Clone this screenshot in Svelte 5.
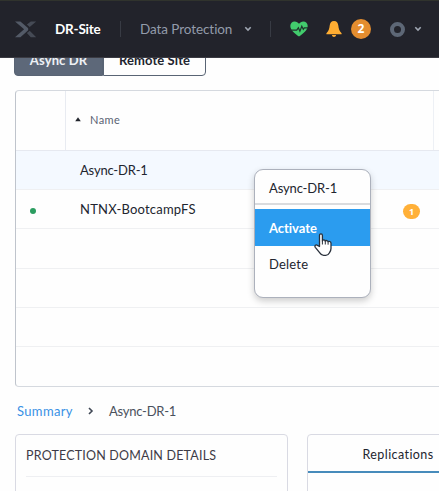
<script>
  const rows = [
    { name: 'Async-DR-1', selected: true },
    { name: 'NTNX-BootcampFS', active: true, alerts: 1 },
    {}, {}, {}, {}
  ];
</script>

<div class="app">
  <header>
    <svg class="logo" width="22" height="17" viewBox="0 0 22 17">
      <path fill="#454a55" d="M15.800.500h5.400l-6.500 5.400-2.800-2.300z M11.900 11.900 14.700 9.800 21.200 16.200h-5.400z" />
      <path fill="#535a67" d="M0 .5h5.400l7 6.100c1.200 1 1.200 2.500 0 3.500l-7 6.100H0l9.100-7.900z" />
    </svg>
    <span class="site">DR-Site</span>
    <i class="sep first"></i>
    <span class="section">Data Protection</span>
    <svg class="chev" width="8" height="6" viewBox="0 0 8 6"><path d="M1.300 1.300 4 4l2.700-2.700" /></svg>
    <i class="sep second"></i>
    <svg class="heart" width="18" height="16" viewBox="0 0 18 16">
      <path fill="#42cc6d" d="M9 15.600C5 12.500.3 9.200.3 4.900.3 2.300 2.200.4 4.700.4 6.500.4 8.100 1.300 9 2.800 9.900 1.300 11.500.4 13.300.4c2.500 0 4.400 1.900 4.400 4.500 0 4.300-4.700 7.600-8.700 10.700z" />
      <path fill="none" stroke="#20352e" stroke-width="1.200" d="M0 9.200h6.700l1.700-2.400 1.500 3.400 1.900-5 1.500 3.100 1-1.500H18" />
    </svg>
    <svg class="bell" width="16" height="16" viewBox="0 0 16 16">
      <path fill="#ffad32" d="M8 0C5.300 0 4 1.800 3.700 4.500 3.300 8 2.800 9.800.4 12.200v1h15.200v-1c-2.400-2.400-2.900-4.200-3.300-7.700C12 1.800 10.700 0 8 0zM5.900 14h4.200c-.2 1.200-1 1.900-2.100 1.900S6.100 15.200 5.900 14z" />
    </svg>
    <span class="count">2</span>
    <i class="ring"></i>
    <svg class="chev last" width="8" height="6" viewBox="0 0 8 6"><path d="M1.300 1.300 4 4l2.700-2.700" /></svg>
  </header>

  <div class="tabs">
    <div class="tab on"><span>Async DR</span></div>
    <div class="tab"><span>Remote Site</span></div>
  </div>

  <section class="table">
    <div class="thead">
      <div class="c0"></div>
      <div class="c1"><svg width="6" height="5" viewBox="0 0 6 5"><path fill="#22252c" d="M3 .3 5.800 4.300H.2z" /></svg><span>Name</span></div>
      <div class="c2"></div>
    </div>
    {#each rows as row}
      <div class="row" class:selected={row.selected}>
        <div class="status">{#if row.active}<i></i>{/if}</div>
        <span class="name" class:long={row.active}>{row.name ?? ''}</span>
        {#if row.alerts}<b>{row.alerts}</b>{/if}
      </div>
    {/each}
  </section>

  <nav>
    <a href="#summary">Summary</a>
    <svg width="6" height="8" viewBox="0 0 6 8"><path fill="none" stroke="#404855" stroke-width="1.600" d="m1 1 3 3-3 3" /></svg>
    <span>Async-DR-1</span>
  </nav>

  <div class="panels">
    <section class="details"><h2>PROTECTION DOMAIN DETAILS</h2></section>
    <section class="reps"><div class="reptab"><span>Replications</span></div></section>
  </div>

  <div class="menu">
    <div class="title">Async-DR-1</div>
    <div class="item hot">Activate</div>
    <div class="item">Delete</div>
  </div>
  <svg class="cursor" width="19" height="24" viewBox="0 0 19 24">
    <path fill="#fff" stroke="#29303b" stroke-width="1.300" stroke-linejoin="round" d="M5.500 13.500V2.400C5.500.4 8.400.4 8.400 2.400V8c.2-1.500 2.700-1.400 2.900.3.400-1.200 2.600-1 2.800.6.700-.9 2.900-.6 2.900 1.300v5.300c0 1.900-.7 3-1.500 4.200-.9 1.700-1.900 2.600-3.700 2.600H9.600c-1.900 0-2.900-.9-3.800-2.400L1.300 14.300c-1.100-1.700.6-3.200 2.200-1.900z" />
    <path fill="none" stroke="#29303b" stroke-width="1" d="M8.400 8v3.500M11.300 8.500v3M14.100 9.200v2.500" />
  </svg>
</div>

<style>
  .app {
    position: relative;
    width: 439px;
    height: 491px;
    overflow: hidden;
    background: #fefefe;
    color: #22252f;
    font: 13px/18px Lato, sans-serif;
    white-space: nowrap;
  }
  header {
    box-sizing: border-box;
    height: 58px;
    display: flex;
    align-items: center;
    background: #22232b;
    border-top: 1px solid #30332d;
    border-bottom: 1px solid #3b3b43;
    padding-left: 15px;
  }
  header > * { flex: none; }
  .site { width: 65px; margin-left: 18px; color: #fff; font-weight: 700; font-size: 13.500px; letter-spacing: -.2px; }
  .sep { width: 1px; height: 16px; background: #383b44; }
  .section { width: 99px; margin-left: 19px; color: #939baa; font-size: 13.500px; letter-spacing: -.08px; }
  .chev { margin-left: 5px; }
  .chev path { fill: none; stroke: #a0a7b3; stroke-width: 1.600; }
  .sep.second { margin-left: 18px; }
  .heart { margin-left: 18.500px; }
  .bell { margin-left: 18.500px; }
  .count {
    width: 20px; height: 20px; margin-left: 9px; border-radius: 50%;
    background: #e48d2f; color: #fff; text-align: center;
    font: 700 12px/20px "Open Sans", sans-serif;
  }
  .ring { box-sizing: border-box; width: 15px; height: 15px; margin-left: 19px; border: 4px solid #5d6776; border-radius: 50%; }
  .last { margin-left: 9px; }

  .tabs { height: 18px; width: 192px; margin-left: 14px; display: flex; align-items: flex-end; overflow: hidden; }
  .tab {
    box-sizing: border-box; flex: none; width: 103px; height: 30px; padding-top: 2px;
    border: 1px solid #596474; border-radius: 0 4px 4px 0; text-align: center;
    font-weight: 700; font-size: 13px; line-height: 22px; letter-spacing: .1px;
  }
  .tab.on { width: 89px; background: #5d6879; color: #eef1f5; border-radius: 4px 0 0 4px; }

  .table {
    box-sizing: border-box; height: 297px; margin: 14px 0 0 15px;
    border: 1px solid #d5d9df; border-left-color: #bfc4cc; border-right: 0; border-radius: 4px 0 0 4px; overflow: hidden;
  }
  .thead { display: flex; height: 59px; border-bottom: 1px solid #e6e9f0; }
  .c0 { width: 49px; border-right: 1px solid #e8ebf1; }
  .c1 { width: 367px; display: flex; align-items: center; border-right: 1px solid #edf0f5; font-size: 11px; color: #596273; }
  .c1 svg { margin: -3px 0 0 9px; }
  .c1 span { margin: -1px 0 0 9px; letter-spacing: .4px; }
  .row { box-sizing: border-box; height: 39.200px; display: flex; align-items: center; border-bottom: 1px solid #eff0f2; }
  .row:last-child { border: 0; }
  .selected { background: #f4f9ff; }
  .status { width: 64px; }
  .status i { display: block; width: 6px; height: 6px; margin: 4px 0 0 14px; border-radius: 50%; background: #2b9d60; }
  .name { width: 323px; font-size: 13px; letter-spacing: -.2px; }
  .name.long { letter-spacing: .2px; }
  .row b { width: 17px; height: 15px; margin-top: 4px; border-radius: 8px; background: #ffb038; color: #fff; text-align: center; font: 700 9px/15px "Open Sans", sans-serif; }

  nav { display: flex; align-items: center; height: 18px; margin: 15px 0 0 17px; }
  nav a { width: 71px; color: #3991e5; text-decoration: none; letter-spacing: .35px; }
  nav span { margin-left: 15px; color: #4a515d; letter-spacing: -.25px; }

  .panels { display: flex; margin: 14px 0 0 15px; }
  .details, .reps { box-sizing: border-box; flex: none; height: 80px; border: 1px solid #d9dae3; border-radius: 4px; }
  .details { width: 273px; padding: 0 10px; }
  h2 { height: 41px; margin: 0; border-bottom: 1px solid #eeeff2; font: 400 12.500px/42px Lato, sans-serif; letter-spacing: .19px; color: #3d3b47; }
  .reps { width: 180px; margin-left: 19px; }
  .reptab { height: 36px; border-bottom: 2px solid #478bbb; padding-left: 54.500px; line-height: 40px; font-size: 12.500px; letter-spacing: .42px; }

  .menu {
    position: absolute; left: 254px; top: 169px; box-sizing: border-box; width: 117px; height: 129px;
    border: 1px solid #acb1bc; border-radius: 9px; background: #fefefe; box-shadow: 0 3px 7px #0003;
  }
  .title { height: 33px; line-height: 37px; padding-left: 14px; border-bottom: 2px solid #d9dbde; font-size: 13px; letter-spacing: -.15px; margin-bottom: 4px; }
  .item { height: 37px; line-height: 37px; padding-left: 14px; font-size: 13px; letter-spacing: .2px; }
  .hot { background: #2b9cef; color: #fff; font-weight: 700; line-height: 38px; letter-spacing: -.05px; }
  .cursor { position: absolute; left: 314px; top: 233px; }
</style>
